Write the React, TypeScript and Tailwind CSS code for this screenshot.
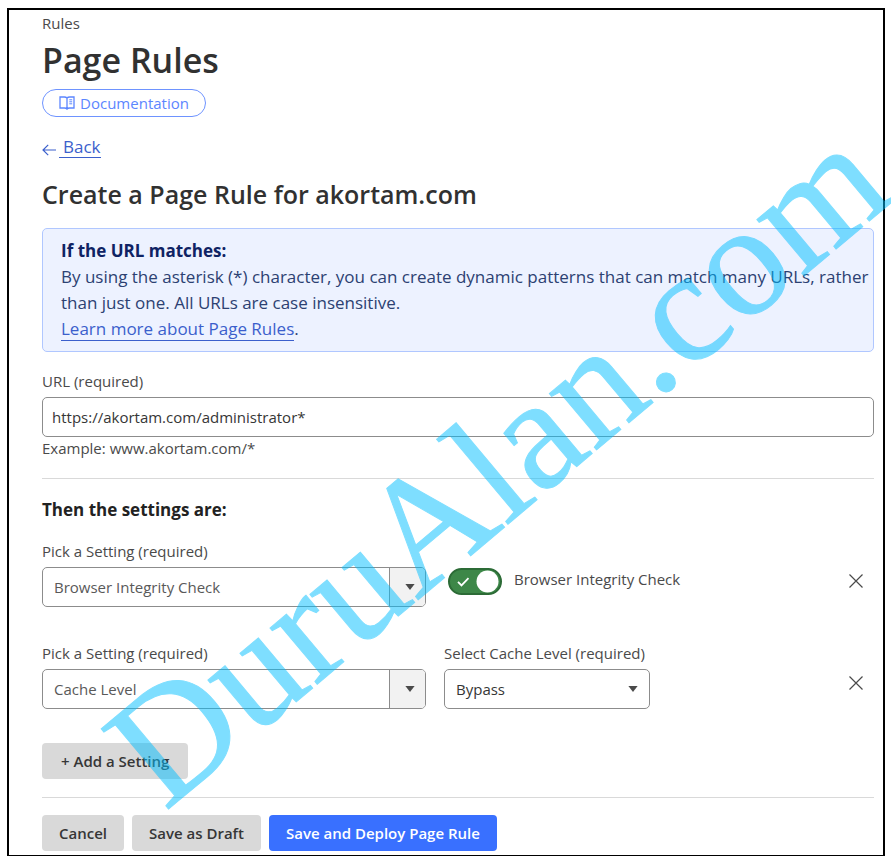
import React, { useState } from 'react';

const Caret: React.FC = () => (
  <svg viewBox="0 0 10 6" className="h-[6px] w-[10px]" fill="#4a4a4a" aria-hidden="true">
    <path d="M0.4 0h9.2L5 6z" />
  </svg>
);

const BookIcon: React.FC = () => (
  <svg viewBox="0 0 16 14" className="h-[14px] w-4" fill="none" stroke="currentColor" aria-hidden="true">
    <path
      d="M8 2.2C7.4 1.3 6.4 1 5.2 1H1v11h4.4c1.2 0 2.1.3 2.6 1 .5-.7 1.4-1 2.6-1H15V1h-4.2C9.6 1 8.6 1.3 8 2.2zM8 2.2V13"
      strokeWidth="1.3"
    />
    <path d="M10.3 3.8h2.9M10.3 5.8h2.9M10.3 7.8h2.9" />
  </svg>
);

const ArrowLeft: React.FC = () => (
  <svg
    viewBox="0 0 14 12"
    className="h-3 w-[14px]"
    fill="none"
    stroke="currentColor"
    strokeWidth="1.2"
    aria-hidden="true"
  >
    <path d="M14 6H1M6.2 0.8L1 6l5.2 5.2" />
  </svg>
);

const SettingPicker: React.FC<{ id: string; value: string }> = ({ id, value }) => {
  const [text, setText] = useState(value);

  return (
    <div className="w-96">
      <label htmlFor={id} className="mb-[6px] block">
        Pick a Setting (required)
      </label>
      <div className="flex h-10 overflow-hidden rounded-[5px] border border-[#8c8c8c]">
        <input
          id={id}
          value={text}
          onChange={(e) => setText(e.target.value)}
          className="min-w-0 flex-1 px-[11px] text-[#595959] outline-none"
        />
        <button
          type="button"
          aria-label="Show settings"
          className="flex w-9 items-center justify-center border-l border-[#8c8c8c] bg-[#f2f2f2] pl-1"
        >
          <Caret />
        </button>
      </div>
    </div>
  );
};

const RemoveButton: React.FC = () => (
  <button type="button" aria-label="Remove setting" className="mt-[33px] mr-[11px] ml-auto">
    <svg viewBox="0 0 14 14" className="h-[14px] w-[14px]" stroke="#4a4a4a" strokeWidth="1.2" aria-hidden="true">
      <path d="M0.5 0.5l13 13M13.5 0.5l-13 13" />
    </svg>
  </button>
);

const App: React.FC = () => {
  const [url, setUrl] = useState('https://akortam.com/administrator*');
  const [integrityCheck, setIntegrityCheck] = useState(true);
  const [cacheLevel, setCacheLevel] = useState('Bypass');

  return (
    <div className="relative overflow-hidden bg-white pt-2 pr-[6px] pb-2 pl-[7px] font-['Open_Sans','Noto_Sans',sans-serif] text-[15px] leading-5 text-[#4a4a4a]">
      <main className="border-2 border-b border-black pr-[9px] pb-1 pl-[33px]">
        <p className="pt-[3px]">Rules</p>
        <h1 className="mt-2 text-[34px] leading-[38px] font-semibold text-[#313131]">Page Rules</h1>
        <a
          href="#documentation"
          className="mt-[10px] flex h-7 w-[164px] items-center justify-center gap-[5px] rounded-full border border-[#6e93ff] text-[#5c86ff]"
        >
          <BookIcon />
          Documentation
        </a>

        <a href="#back" className="mt-5 flex w-fit items-center text-[17px] text-[#3b5fcc]">
          <span className="mr-[3px] pt-1">
            <ArrowLeft />
          </span>
          <span className="border-b border-[#3b5fcc] pl-1">Back</span>
        </a>

        <h2 className="mt-5 text-[25px] leading-8 font-semibold text-[#313131]">
          Create a Page Rule for akortam.com
        </h2>

        <section className="mt-[18px] rounded-[5px] border border-[#b0c7ff] bg-[#edf2ff] py-[9px] pl-[18px] text-[17px] leading-[26px] text-[#2c4172]">
          <h3 className="font-bold text-[#0f2364]">If the URL matches:</h3>
          <p>
            By using the asterisk (*) character, you can create dynamic patterns that can match many URLs, rather than
            just one. All URLs are case insensitive.
          </p>
          <p>
            <a href="#learn-more" className="border-b border-[#3b5fcc] text-[#3b5fcc]">
              Learn more about Page Rules
            </a>
            .
          </p>
        </section>

        <div className="mt-[19px]">
          <label htmlFor="url" className="mb-[6px] block">
            URL (required)
          </label>
          <input
            id="url"
            value={url}
            onChange={(e) => setUrl(e.target.value)}
            className="block h-10 w-full rounded-[5px] border border-[#8c8c8c] px-[9px] text-[#363636] outline-none"
          />
          <p className="mt-px">Example: www.akortam.com/*</p>
        </div>

        <hr className="mt-5 border-[#d9d9d9]" />

        <h3 className="mt-[21px] text-[17px] font-bold text-[#222222]">Then the settings are:</h3>

        <div className="mt-[21px] flex items-start gap-[18px]">
          <SettingPicker id="setting-1" value="Browser Integrity Check" />
          <label className="mt-[27px] ml-1 flex items-start gap-3">
            <span className="grid h-[27px] w-[54px] items-center">
              <input
                type="checkbox"
                checked={integrityCheck}
                onChange={(e) => setIntegrityCheck(e.target.checked)}
                className="h-[27px] w-[54px] appearance-none rounded-full border-2 border-[#2c6b36] bg-[#8c8c8c] [grid-area:1/1] checked:bg-[#3d8748]"
              />
              <svg viewBox="0 0 54 27" className="pointer-events-none [grid-area:1/1]" fill="none" aria-hidden="true">
                <path d="M10 13.8l3.5 3.6 7-7.2" stroke="#fff" strokeWidth="1.8" />
                <circle cx="39.5" cy="13.5" r="11" fill="#fff" />
              </svg>
            </span>
            <span className="pt-px">Browser Integrity Check</span>
          </label>
          <RemoveButton />
        </div>

        <div className="mt-9 flex items-start gap-[18px]">
          <SettingPicker id="setting-2" value="Cache Level" />
          <div className="w-[206px]">
            <label htmlFor="cache-level" className="mb-[6px] block">
              Select Cache Level (required)
            </label>
            <div className="grid items-center">
              <select
                id="cache-level"
                value={cacheLevel}
                onChange={(e) => setCacheLevel(e.target.value)}
                className="h-10 w-full appearance-none rounded-[5px] border border-[#8c8c8c] bg-white px-[11px] text-[#363636] [grid-area:1/1]"
              >
                <option>Bypass</option>
                <option>Standard</option>
              </select>
              <span className="pointer-events-none mr-3 justify-self-end [grid-area:1/1]">
                <Caret />
              </span>
            </div>
          </div>
          <RemoveButton />
        </div>

        <button
          type="button"
          className="mt-[34px] block h-9 rounded-[4px] bg-[#d9d9d9] px-[19px] font-semibold text-[#363636]"
        >
          + Add a Setting
        </button>

        <hr className="mt-[18px] border-[#d9d9d9]" />

        <div className="mt-[17px] flex gap-2 font-semibold text-[#363636]">
          <button type="button" className="h-9 rounded-[4px] bg-[#d9d9d9] px-[17px]">
            Cancel
          </button>
          <button type="button" className="h-9 rounded-[4px] bg-[#d9d9d9] px-[17px]">
            Save as Draft
          </button>
          <button type="submit" className="h-9 rounded-[4px] bg-[#3970ff] px-[17px] text-white">
            Save and Deploy Page Rule
          </button>
        </div>
      </main>

      {/* Diagonal watermark, turned about the start of its baseline */}
      <span className="pointer-events-none absolute top-[678px] left-[165px] origin-[0_134px] -rotate-40 font-['Liberation_Serif',serif] text-[160px] leading-none whitespace-nowrap text-[#00bfff] opacity-50 select-none [-webkit-text-stroke:1px_#00bfff]">
        DuruAlan.com
      </span>
    </div>
  );
};

export default App;
